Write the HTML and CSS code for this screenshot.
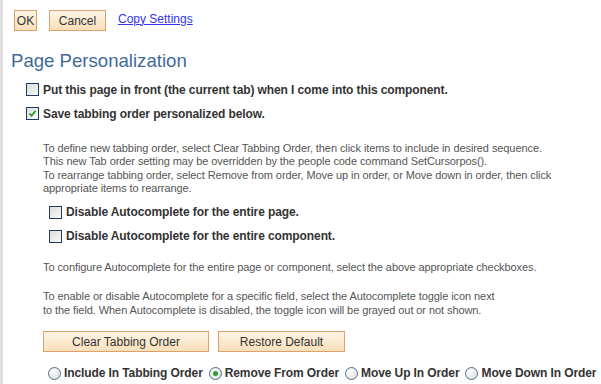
FILE: index.html
```html
<!DOCTYPE html>
<html>
<head>
<meta charset="utf-8">
<link rel="stylesheet" href="styles.css">
</head>
<body>
<div class="page">
  <div class="toolbar">
    <button class="btn btn-ok">OK</button>
    <button class="btn btn-cancel">Cancel</button>
    <a class="link" href="#">Copy Settings</a>
  </div>
  <h1 class="title">Page Personalization</h1>
  <div class="opts">
    <label class="check-row"><span class="cb"></span><span class="cb-label">Put this page in front (the current tab) when I come into this component.</span></label>
    <label class="check-row"><span class="cb checked"><svg viewBox="0 0 13 13" width="13" height="13"><path d="M3.5 6.5 L5.5 8.6 L9.6 3.8" fill="none" stroke="#2f9a2f" stroke-width="1.8"/></svg></span><span class="cb-label">Save tabbing order personalized below.</span></label>
  </div>
  <div class="section">
    <p class="info info-first">To define new tabbing order, select Clear Tabbing Order, then click items to include in desired sequence.<br>This new Tab order setting may be overridden by the people code command SetCursorpos().<br>To rearrange tabbing order, select Remove from order, Move up in order, or Move down in order, then click<br>appropriate items to rearrange.</p>
    <div class="auto-opts">
      <label class="check-row"><span class="cb"></span><span class="cb-label">Disable Autocomplete for the entire page.</span></label>
      <label class="check-row"><span class="cb"></span><span class="cb-label">Disable Autocomplete for the entire component.</span></label>
    </div>
    <p class="info info-config">To configure Autocomplete for the entire page or component, select the above appropriate checkboxes.</p>
    <p class="info info-enable">To enable or disable Autocomplete for a specific field, select the Autocomplete toggle icon next<br>to the field. When Autocomplete is disabled, the toggle icon will be grayed out or not shown.</p>
    <div class="actions">
      <button class="btn btn-wide btn-clear">Clear Tabbing Order</button>
      <button class="btn btn-wide btn-restore">Restore Default</button>
    </div>
    <div class="radios">
      <label class="radio-row"><span class="rb"></span><span class="rb-label">Include In Tabbing Order</span></label>
      <label class="radio-row"><span class="rb selected"></span><span class="rb-label">Remove From Order</span></label>
      <label class="radio-row"><span class="rb"></span><span class="rb-label">Move Up In Order</span></label>
      <label class="radio-row"><span class="rb"></span><span class="rb-label">Move Down In Order</span></label>
    </div>
  </div>
</div>
</body>
</html>
```

FILE: styles.css
```css
html, body {
  margin: 0;
  padding: 0;
  background: #ffffff;
}
body {
  font-family: "Liberation Sans", Arial, sans-serif;
  color: #333333;
  width: 601px;
  height: 384px;
  overflow: hidden;
}
.page {
  border-left: 3px solid #dedede;
  height: 384px;
  box-sizing: border-box;
  padding-left: 11px;
}
.toolbar {
  display: flex;
  align-items: center;
  padding-top: 10px;
  height: 21px;
}
.btn {
  font-family: "Liberation Sans", Arial, sans-serif;
  font-size: 12px;
  color: #333333;
  border: 1px solid #dda16a;
  background: linear-gradient(#fdf4e6, #f9dfba);
  height: 21px;
  padding: 0;
  margin: 0;
  box-sizing: border-box;
  border-radius: 0;
}
.btn-ok {
  width: 23px;
}
.btn-cancel {
  width: 57px;
  margin-left: 12px;
}
.link {
  margin-left: 12px;
  font-size: 12px;
  color: #3333ee;
  text-decoration: underline;
  position: relative;
  top: -2px;
}
.title {
  margin: 19px 0 0 -3px;
  font-size: 18.6px;
  font-weight: normal;
  color: #3f6a9a;
  line-height: 22px;
  height: 22px;
}
.opts {
  margin-left: 12px;
  margin-top: 11px;
}
.check-row {
  display: flex;
  align-items: center;
  height: 13px;
  margin-bottom: 11px;
}
.cb {
  width: 13px;
  height: 13px;
  box-sizing: border-box;
  border: 1px solid #1e3d5c;
  background: linear-gradient(135deg, #dcdcdc, #f8f8f8);
  flex: none;
  position: relative;
}
.cb svg {
  position: absolute;
  left: -1px;
  top: -1px;
}
.cb-label {
  margin-left: 4px;
  font-size: 12px;
  font-weight: bold;
  letter-spacing: -0.1px;
  color: #333333;
  white-space: nowrap;
}
.section {
  margin-left: 29px;
}
.info {
  margin: 0;
  font-size: 11px;
  line-height: 13.4px;
  letter-spacing: -0.08px;
  color: #555555;
  white-space: nowrap;
}
.info-first {
  margin-top: 22px;
}
.auto-opts {
  margin-left: 6px;
  margin-top: 10px;
}
.info-config {
  margin-top: 18px;
}
.info-enable {
  margin-top: 15px;
  line-height: 14px;
}
.actions {
  display: flex;
  gap: 9px;
  margin-top: 14px;
}
.btn-clear {
  width: 166px;
}
.btn-restore {
  width: 127px;
}
.radios {
  display: flex;
  align-items: center;
  margin-top: 14px;
  margin-left: 5px;
  gap: 6px;
}
.radio-row {
  display: flex;
  align-items: center;
}
.rb {
  width: 13px;
  height: 13px;
  box-sizing: border-box;
  border-radius: 50%;
  border: 1px solid #4a6f93;
  background: radial-gradient(circle at 35% 35%, #ffffff, #d6d6d6);
  flex: none;
  position: relative;
}
.rb.selected::after {
  content: "";
  position: absolute;
  left: 3px;
  top: 3px;
  width: 5px;
  height: 5px;
  border-radius: 50%;
  background: #2e9a32;
}
.rb-label {
  margin-left: 3px;
  font-size: 12px;
  font-weight: bold;
  letter-spacing: -0.1px;
  white-space: nowrap;
}
```
